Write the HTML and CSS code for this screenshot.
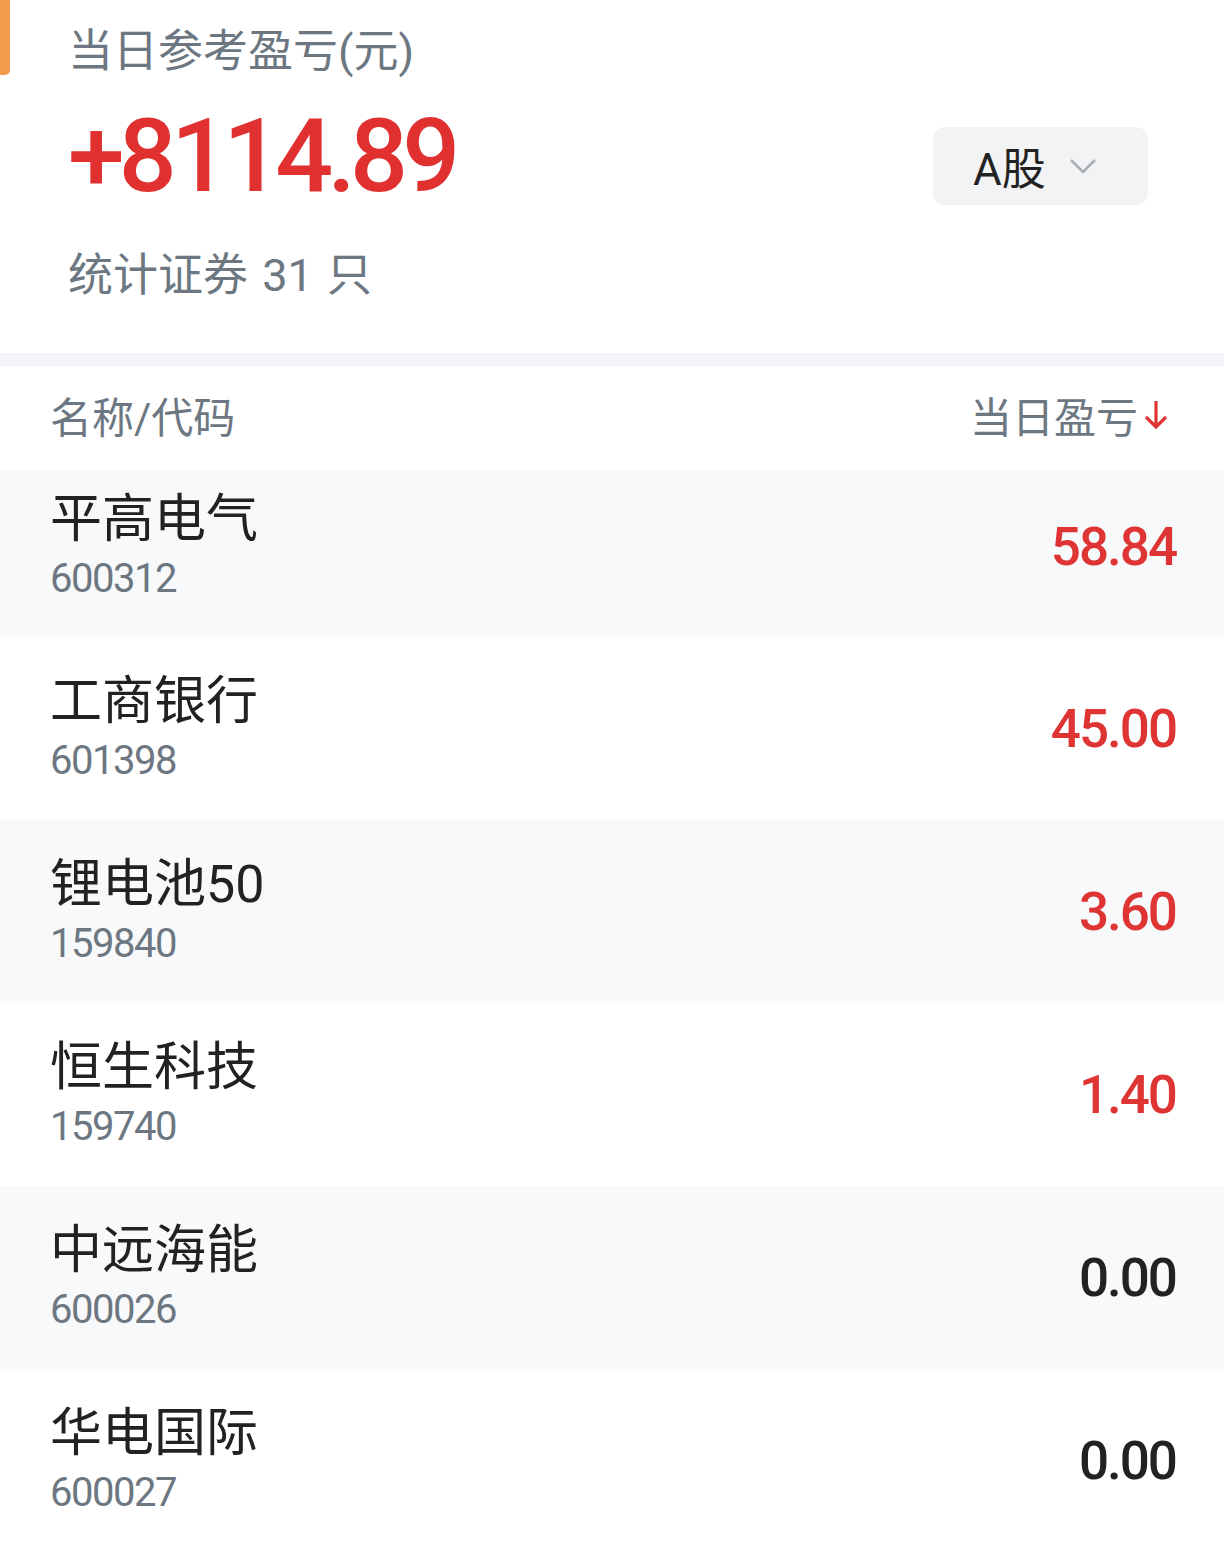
FILE: index.html
```html
<!DOCTYPE html>
<html lang="zh-CN">
<head>
    <meta charset="UTF-8">
    <meta name="viewport" content="width=device-width, initial-scale=1.0">
    <title>当日参考盈亏</title>
    <link rel="stylesheet" href="styles.css">
</head>
<body>
<div class="summary">
    <div class="summary-title">当日参考盈亏(元)</div>
    <div class="summary-main">
        <div class="summary-total">+8114.89</div>
        <div class="market-select">
            <span>A股</span>
            <svg width="30" height="20" viewBox="0 0 30 20"><path d="M3 4 L15 16 L27 4" fill="none" stroke="#a9afb6" stroke-width="2.6"/></svg>
        </div>
    </div>
    <div class="summary-count">统计证券 31 只</div>
</div>

<div class="gap"></div>

<div class="list-head">
    <span>名称/代码</span>
    <span class="sort">当日盈亏<svg width="28" height="36" viewBox="0 0 28 36"><path d="M14 5 V31 M4 21 L14 31 L24 21" fill="none" stroke="#e03434" stroke-width="3.2"/></svg></span>
</div>

<div class="list">
    <div class="row">
        <div class="stock"><div class="name">平高电气</div><div class="code">600312</div></div>
        <div class="value up">58.84</div>
    </div>
    <div class="row">
        <div class="stock"><div class="name">工商银行</div><div class="code">601398</div></div>
        <div class="value up">45.00</div>
    </div>
    <div class="row">
        <div class="stock"><div class="name">锂电池50</div><div class="code">159840</div></div>
        <div class="value up">3.60</div>
    </div>
    <div class="row">
        <div class="stock"><div class="name">恒生科技</div><div class="code">159740</div></div>
        <div class="value up">1.40</div>
    </div>
    <div class="row">
        <div class="stock"><div class="name">中远海能</div><div class="code">600026</div></div>
        <div class="value">0.00</div>
    </div>
    <div class="row">
        <div class="stock"><div class="name">华电国际</div><div class="code">600027</div></div>
        <div class="value">0.00</div>
    </div>
</div>
</body>
</html>
```

FILE: styles.css
```css
html, body {
    margin: 0;
    background: #fff;
    font-family: Roboto, "Noto Sans CJK SC", sans-serif;
    color: #222;
}

.summary {
    position: relative;
    padding: 22px 76px 0 68px;
    height: 331px;
}
.summary::before {
    content: "";
    position: absolute;
    left: 0;
    top: 0;
    width: 10px;
    height: 75px;
    background: #f39a4c;
    border-radius: 0 0 5px 0;
}

.summary-title {
    font-size: 45px;
    line-height: 60px;
    color: #6d7781;
}

.summary-main {
    display: flex;
    justify-content: space-between;
    align-items: flex-start;
}
.summary-total {
    margin-top: 14px;
    font-size: 102px;
    font-weight: 500;
    line-height: 120px;
    letter-spacing: -5.8px;
    color: #e03030;
}
.market-select {
    margin-top: 45px;
    width: 215px;
    height: 78px;
    box-sizing: border-box;
    padding-left: 40px;
    display: flex;
    align-items: center;
    gap: 22px;
    background: #f2f3f5;
    border-radius: 12px;
    font-size: 44px;
    color: #222;
}

.summary-count {
    margin-top: 30px;
    font-size: 45px;
    line-height: 60px;
    word-spacing: 3px;
    color: #6d7781;
}

.gap {
    height: 13px;
    background: #f3f4f7;
}

.list-head {
    height: 104px;
    box-sizing: border-box;
    padding: 0 54px 8px 50px;
    display: flex;
    justify-content: space-between;
    align-items: center;
    font-size: 42px;
    color: #6d7781;
}
.sort {
    display: flex;
    align-items: center;
    gap: 4px;
}

.row {
    height: 183px;
    padding: 0 48px 0 50px;
    display: flex;
    justify-content: space-between;
    align-items: center;
}
.row:nth-child(odd) {
    background: #f8f9fa;
}
.row:first-child {
    height: 167px;
    box-sizing: border-box;
    padding-bottom: 13px;
}

.name {
    font-size: 52px;
    line-height: 64px;
    color: #222;
}
.code {
    font-size: 40px;
    line-height: 54px;
    letter-spacing: -1.5px;
    color: #6d7781;
}

.value {
    font-size: 53px;
    font-weight: 500;
    letter-spacing: -2px;
    color: #222;
}
.value.up {
    color: #de3434;
}
```
